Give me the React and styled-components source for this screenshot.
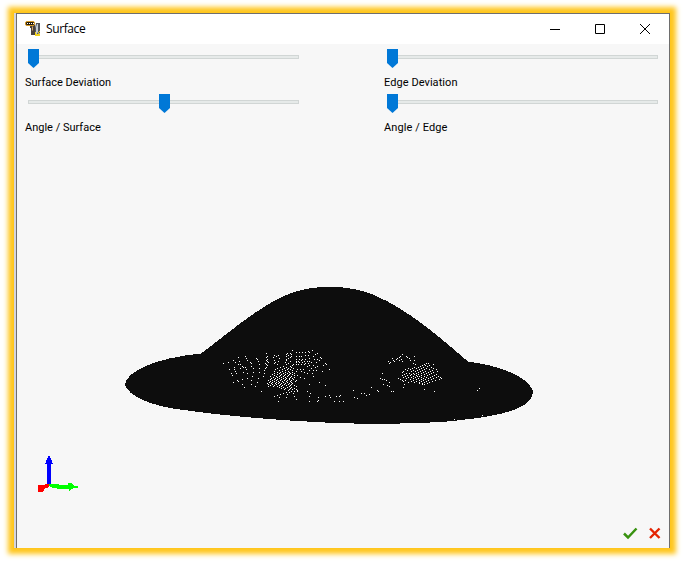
import React from 'react';
import styled, { createGlobalStyle } from 'styled-components';

const GlobalStyle = createGlobalStyle`
  * { box-sizing: border-box; }
  body { margin: 0; background: #fff; overflow: hidden; }
`;

const Desktop = styled.main`
  width: 684px;
  height: 561px;
  padding: 13px 0 0 14px;
  background: #fff;
`;

const Frame = styled.div`
  width: 656px;
  height: 535px;
  padding-left: 2px;
  background: #d5d5dc;
  box-shadow: 0 0 5px 6px #ffc61c;
`;

const Window = styled.section`
  display: flex;
  flex-direction: column;
  height: 100%;
  border: 1px solid #6e6e6e;
  border-bottom: 0;
  background: #f7f7f7;
`;

const TitleBar = styled.header`
  display: flex;
  align-items: center;
  height: 30px;
  flex: none;
  padding: 0 1px 0 8px;
  background: #fff;
`;

const Title = styled.h1`
  flex: 1;
  margin: 0 0 0 4px;
  font: 400 12px/16px "Open Sans", "Noto Sans", sans-serif;
  letter-spacing: -0.4px;
  color: #000;
`;

const CaptionButton = styled.button`
  display: flex;
  align-items: center;
  justify-content: center;
  width: ${(p) => p.$width || 45}px;
  height: 28px;
  padding: 0;
  border: 0;
  background: transparent;
`;

const Controls = styled.div`
  display: grid;
  grid-template-columns: 271px 271px;
  grid-auto-rows: 45px;
  column-gap: 88px;
  padding: 5px 0 0 11px;
`;

const Field = styled.div`
  display: flex;
  flex-direction: column;
`;

const Slider = styled.div`
  display: grid;
  align-items: start;
  height: 26px;
`;

const Track = styled.div`
  grid-area: 1 / 1;
  height: 4px;
  margin-top: 6px;
  border: 1px solid #d1d6d5;
  background: #e6eae9;
`;

const Thumb = styled.div`
  grid-area: 1 / 1;
  width: 11px;
  height: 19px;
  margin-left: ${(p) => p.$offset}px;
  background: #0078d7;
  clip-path: polygon(0 0, 100% 0, 100% 74%, 50% 100%, 0 74%);
`;

const Label = styled.label`
  margin-left: -3px;
  font: 400 11px/16px Roboto, sans-serif;
  letter-spacing: ${(p) => p.$spacing || 0}px;
  color: #000;
  white-space: nowrap;
`;

const Viewport = styled.div`
  flex: 1;
  min-height: 0;
  display: flex;
  flex-direction: column;
`;

const Model = styled.svg`
  display: block;
  width: 420px;
  height: 150px;
  margin: 141px 0 0 103px;
  flex: none;
  shape-rendering: crispEdges;
`;

const Footer = styled.footer`
  display: flex;
  justify-content: space-between;
  align-items: flex-end;
  flex: 1;
  padding: 0 8px 7px 18px;
`;

const Axes = styled.svg`
  width: 46px;
  height: 42px;
  margin-bottom: 46px;
  shape-rendering: crispEdges;
`;

const Actions = styled.div`
  display: flex;
  gap: 10px;
`;

const ActionButton = styled.button`
  display: flex;
  width: ${(p) => p.$width}px;
  height: 15px;
  padding: 0;
  border: 0;
  background: transparent;
`;

const fields = [
  { label: 'Surface Deviation', offset: 0, spacing: 0 },
  { label: 'Edge Deviation', offset: 0, spacing: 0.06 },
  { label: 'Angle / Surface', offset: 131, spacing: 0 },
  { label: 'Angle / Edge', offset: 0, spacing: 0.1 },
];

// Mesh highlights: each line holds a row number and the columns lit on it.
const leftMesh = `
10 82 102
11 98
12 86 89 92 95 99
13 56 77 80 107
14 76 81 105
15 64 68 78 95 98
16 35 57 66 76 81 86 89 91 103
17 28 56 63 80 110
18 36 46 69 78 99 111
19 47 57 76 86 89 92 95 104 107
20 23 37 56 64 76 91 109
21 29 48 57 68 80 86 88 94 97 99
22 18 25 40 58 65 75 86 89 92 101 106
23 13 41 55 64 78 95 98 115
24 28 30 49 56 67 76 83 86 88 91 94 116
25 57 82 99 103 113
26 32 41 73 80 97 107
27 24 33 35 56 70 76 81 105
28 30 43 49 55 67 74 78 83 101
29 19 24 36 65 72 77 80 87 90 93 119
30 54 69 75 82 99 103 106
31 25 64 72 78 86 91 112
32 33 43 49 67 70 75 79 82 94
33 21 26 37 54 64 69 73 77 80 84 97 102
34 62 67 71 75 79 82
35 22 64 70 74 78 84 87
36 42 53 60 66 69 73 77 81 103
37 63 67 71 75 80 84 90
38 37 48 61 65 69 73 76 79 82 94
39 32 60 64 67 71 75 79 83
40 27 41 58 62 66 70 74 77 81 86
41 28 60 64 68 72 76 80 85
42 23 47 59 62 66 69 73 77 81 109
43 57 61 65 68 71 75 79 82
44 32 41 58 62 66 70 74 78 81 99
45 60 64 69 72 76 80 84 115
46 45 58 63 67 71 79 86
47 34 69 73 77 81
48 71 75 80 84
49 74 79 82 86
50 78 87
51 51 81 84 87 97
52 76 79
53 73 83 100
54 70 77
55 67 119
56 64 84 99 115 126
57 69 76 108 120
59 86
60 108
61 68 99 107 124 129
`;

const rightMesh = `
14 72
16 70 76 84
17 69 77
18 62 67 79
19 66 71
20 63 69 80 84
21 58 64 72
22 60
23 59 83 96 98
24 85 94 103
25 92 95 99
26 90 97
27 84 88 93 101
28 78 82 86 91 96 103
29 75 80 89 94 99 106
30 77 83 87 92 102
31 73 81 85 90 95 100 107
32 72 88 93 98 103
33 52 76 79 83 86 91 96 101
34 74 81 84 88 94 99 106
35 72 77 80 86 91 97 104
36 75 83 87 89 94 102 108
37 73 78 81 85 91 96 100 106 110
38 50 68 76 83 88 93 98 103 111
39 52 54 70 80 86 91 95 101 109
40 56 72 75 83 89 93 98 105
41 73 81 86 91 96 102
42 59 78 84 89 94 99
43 89 92 97
44 53 74 92 94
45 57
46 59
47 41 73
49 94
48 149
50 23 47 147
51 48 61 63 104
53 31 34
54 39
55 10 36
56 9
57 0 24
58 27
61 4 9 13
75 152
79 124
`;

function meshPath(rows) {
  return rows
    .trim()
    .split('\n')
    .flatMap((line) => {
      const [y, ...xs] = line.split(' ').map(Number);
      return xs.map((x) => `M${x} ${y}h1v1h-1z`);
    })
    .join('');
}

function MillIcon() {
  return (
    <svg width="17" height="16" viewBox="0 0 17 16">
      <path d="M5 4h5v10H6V7H5z" fill="#49413c" />
      <path d="M11 2h4v10l-3 3h-2V7z" fill="#53565c" />
      <path d="M12 3h1v8l-2 3V6z" fill="#c5cbd1" />
      <path d="M7 6l1-1v4l-1 1z" fill="#d0a76e" />
      <path d="M10 11h1v2h2v-2h1l-1 4h-3zM14 10h1v1h-1zM13 13h2v2h-2z" fill="#f0d21d" />
      <rect x=".5" y=".5" width="9" height="4" rx="1.5" fill="#241b0c" stroke="#d79b24" />
      <path d="M2 2h1v1H2zM4 2h1v1H4zM6 2h1v1H6zM8 2h1v1H8z" fill="#fff" />
    </svg>
  );
}

function ModelView() {
  return (
    <Model viewBox="120 280 420 150">
      <path
        d="M125 384.500C126 372 154 358 201 353.500C229 333 262 303 293 292.500C318 284 350 285 374 295C409 310 438 336 468 361.500C502 366 528 377 533 391C534 409 499 416 461 420C438 423.500 370 425 325 422.500C273 420 224 416 176 409C150 405 128 396 125 384.500Z"
        fill="#0d0d0d"
      />
      <path transform="translate(210 340)" d={meshPath(leftMesh)} fill="#fff" />
      <path transform="translate(330 340)" d={meshPath(rightMesh)} fill="#fff" />
    </Model>
  );
}

function AxisTriad() {
  return (
    <Axes viewBox="35 454 46 42">
      <path d="M47 485V465H45L47 460L49 456L51 460L53 465H51V485Z" fill="#00f" />
      <path d="M49 485H59V486H68V484H71L75 487H78V489H74L69 492V490H59L50 488Z" fill="#0f0" />
      <path d="M38 486H43L46 485H49V488L46 489L44 490V492L42 493H38Z" fill="#f00" />
    </Axes>
  );
}

export default function App() {
  return (
    <>
      <GlobalStyle />
      <Desktop>
        <Frame>
          <Window>
            <TitleBar>
              <MillIcon />
              <Title>Surface</Title>
              <CaptionButton aria-label="Minimize">
                <svg width="10" height="10"><path d="M0 5.500H10" stroke="#000" /></svg>
              </CaptionButton>
              <CaptionButton aria-label="Maximize">
                <svg width="10" height="10"><path d="M.5.5h9v9h-9z" fill="none" stroke="#000" /></svg>
              </CaptionButton>
              <CaptionButton $width={46} aria-label="Close">
                <svg width="10" height="10"><path d="M0 0L10 10M10 0L0 10" stroke="#000" /></svg>
              </CaptionButton>
            </TitleBar>
            <Controls>
              {fields.map((f) => (
                <Field key={f.label}>
                  <Slider>
                    <Track />
                    <Thumb $offset={f.offset} />
                  </Slider>
                  <Label $spacing={f.spacing}>{f.label}</Label>
                </Field>
              ))}
            </Controls>
            <Viewport>
              <ModelView />
              <Footer>
                <AxisTriad />
                <Actions>
                  <ActionButton $width={15} aria-label="Accept">
                    <svg width="15" height="15">
                      <path d="M1 7.500L5 11.500L13.500 2.500" fill="none" stroke="#38920f" strokeWidth="2.500" />
                    </svg>
                  </ActionButton>
                  <ActionButton $width={13} aria-label="Cancel">
                    <svg width="13" height="15">
                      <path d="M2 2.500L11.500 12M11.500 2.500L2 12" stroke="#e42403" strokeWidth="2.400" />
                    </svg>
                  </ActionButton>
                </Actions>
              </Footer>
            </Viewport>
          </Window>
        </Frame>
      </Desktop>
    </>
  );
}
